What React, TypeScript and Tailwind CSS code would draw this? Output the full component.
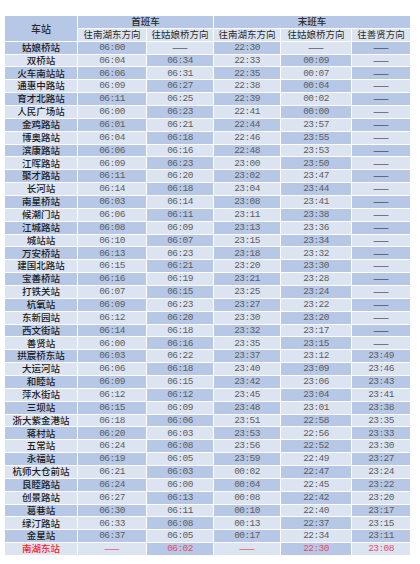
// Line 1 first/last train timetable, rendered as a banded grid

type Row = [string, string, string, string, string, string];

const DASH = '——';

const ROWS: Row[] = [
  ['姑娘桥站', '06:00', DASH, '22:30', DASH, DASH],
  ['双桥站', '06:04', '06:34', '22:33', '00:09', DASH],
  ['火车南站站', '06:06', '06:31', '22:35', '00:07', DASH],
  ['通惠中路站', '06:09', '06:27', '22:38', '00:04', DASH],
  ['育才北路站', '06:11', '06:25', '22:39', '00:02', DASH],
  ['人民广场站', '06:00', '06:23', '22:41', '00:00', DASH],
  ['金鸡路站', '06:01', '06:21', '22:44', '23:57', DASH],
  ['博奥路站', '06:04', '06:18', '22:46', '23:55', DASH],
  ['滨康路站', '06:06', '06:16', '22:48', '23:53', DASH],
  ['江晖路站', '06:09', '06:23', '23:00', '23:50', DASH],
  ['聚才路站', '06:11', '06:20', '23:02', '23:47', DASH],
  ['长河站', '06:14', '06:18', '23:04', '23:44', DASH],
  ['南星桥站', '06:03', '06:14', '23:08', '23:41', DASH],
  ['候潮门站', '06:06', '06:11', '23:11', '23:38', DASH],
  ['江城路站', '06:08', '06:09', '23:13', '23:36', DASH],
  ['城站站', '06:10', '06:07', '23:15', '23:34', DASH],
  ['万安桥站', '06:13', '06:23', '23:18', '23:32', DASH],
  ['建国北路站', '06:15', '06:21', '23:20', '23:30', DASH],
  ['宝善桥站', '06:16', '06:19', '23:21', '23:28', DASH],
  ['打铁关站', '06:07', '06:15', '23:25', '23:24', DASH],
  ['杭氧站', '06:09', '06:23', '23:27', '23:22', DASH],
  ['东新园站', '06:12', '06:20', '23:30', '23:20', DASH],
  ['西文街站', '06:14', '06:18', '23:32', '23:17', DASH],
  ['善贤站', '06:00', '06:16', '23:35', '23:15', DASH],
  ['拱宸桥东站', '06:03', '06:22', '23:37', '23:12', '23:49'],
  ['大运河站', '06:06', '06:18', '23:40', '23:09', '23:46'],
  ['和睦站', '06:09', '06:15', '23:42', '23:06', '23:43'],
  ['萍水街站', '06:12', '06:12', '23:45', '23:04', '23:41'],
  ['三坝站', '06:15', '06:09', '23:48', '23:01', '23:38'],
  ['浙大紫金港站', '06:18', '06:06', '23:51', '22:58', '23:35'],
  ['蒋村站', '06:20', '06:03', '23:53', '22:56', '23:33'],
  ['五常站', '06:24', '06:08', '23:56', '22:52', '23:30'],
  ['永福站', '06:19', '06:05', '23:59', '22:49', '23:27'],
  ['杭师大仓前站', '06:21', '06:03', '00:02', '22:47', '23:24'],
  ['良睦路站', '06:24', '06:00', '00:04', '22:45', '23:22'],
  ['创景路站', '06:27', '06:13', '00:08', '22:42', '23:20'],
  ['葛巷站', '06:30', '06:11', '00:10', '22:40', '23:17'],
  ['绿汀路站', '06:33', '06:08', '00:13', '22:37', '23:15'],
  ['金星站', '06:37', '06:05', '00:17', '22:34', '23:11'],
  ['南湖东站', DASH, '06:02', DASH, '22:30', '23:08'],
];

const CJK = "font-['Noto_Sans_CJK_SC','Liberation_Sans',sans-serif]";
const MONO = "font-['Liberation_Mono','Noto_Sans_CJK_SC',monospace]";

function Cell({
  value,
  dark,
  station,
  last,
}: {
  value: string;
  dark: boolean;
  station?: boolean;
  last?: boolean;
}) {
  const bg = dark ? 'bg-[#b7c8e6]' : 'bg-[#dce4f2]';
  const isDash = value === DASH;

  let text = '';
  if (station) {
    text = last
      ? `${CJK} text-[9.5px] font-medium text-[#ff1a1a]`
      : `${CJK} text-[9.5px] font-medium text-[#1c1c1c]`;
  } else if (isDash) {
    text = last
      ? `${CJK} text-[9.5px] text-[#e8283c]`
      : `${CJK} text-[9.5px] text-[#222]`;
  } else {
    text = last
      ? `${MONO} text-[9.5px] tracking-[-0.6px] text-[#ea4b63]`
      : `${MONO} text-[9.5px] tracking-[-0.6px] text-[#5e5e5e]`;
  }

  return (
    <div className={`flex items-center justify-center leading-none ${bg}`}>
      <span className={text}>{value}</span>
    </div>
  );
}

export default function App() {
  return (
    <main className="min-h-[564px] w-[420px] bg-white pt-[16px] pl-[5px]">
      <div className="grid h-[539px] w-fit grid-cols-[72px_68px_66px_66px_70px_58px] grid-rows-[repeat(42,minmax(0,1fr))] gap-px bg-white">
        {/* Header */}
        <div className={`row-span-2 flex items-center justify-center bg-[#b7c8e6] ${CJK} text-[10px] font-medium text-[#2a2a2a]`}>
          车站
        </div>
        <div className={`col-span-2 flex items-center justify-center bg-[#b7c8e6] ${CJK} text-[9.5px] font-medium leading-none text-[#2a2a2a]`}>
          首班车
        </div>
        <div className={`col-span-3 flex items-center justify-center bg-[#b7c8e6] ${CJK} text-[9.5px] font-medium leading-none text-[#2a2a2a]`}>
          末班车
        </div>
        {['往南湖东方向', '往姑娘桥方向', '往南湖东方向', '往姑娘桥方向', '往善贤方向'].map((h, i) => (
          <div
            key={i}
            className={`flex items-center justify-center bg-[#dce4f2] ${CJK} text-[9.5px] leading-none text-[#2a2a2a]`}
          >
            {h}
          </div>
        ))}

        {/* Body */}
        {ROWS.map((row, r) =>
          row.map((v, c) => {
            const base = r % 2 === 0;
            const dark = c === 2 || c === 4 ? !base : base;
            return (
              <Cell
                key={`${r}-${c}`}
                value={v}
                dark={dark}
                station={c === 0}
                last={r === ROWS.length - 1}
              />
            );
          })
        )}
      </div>
    </main>
  );
}
